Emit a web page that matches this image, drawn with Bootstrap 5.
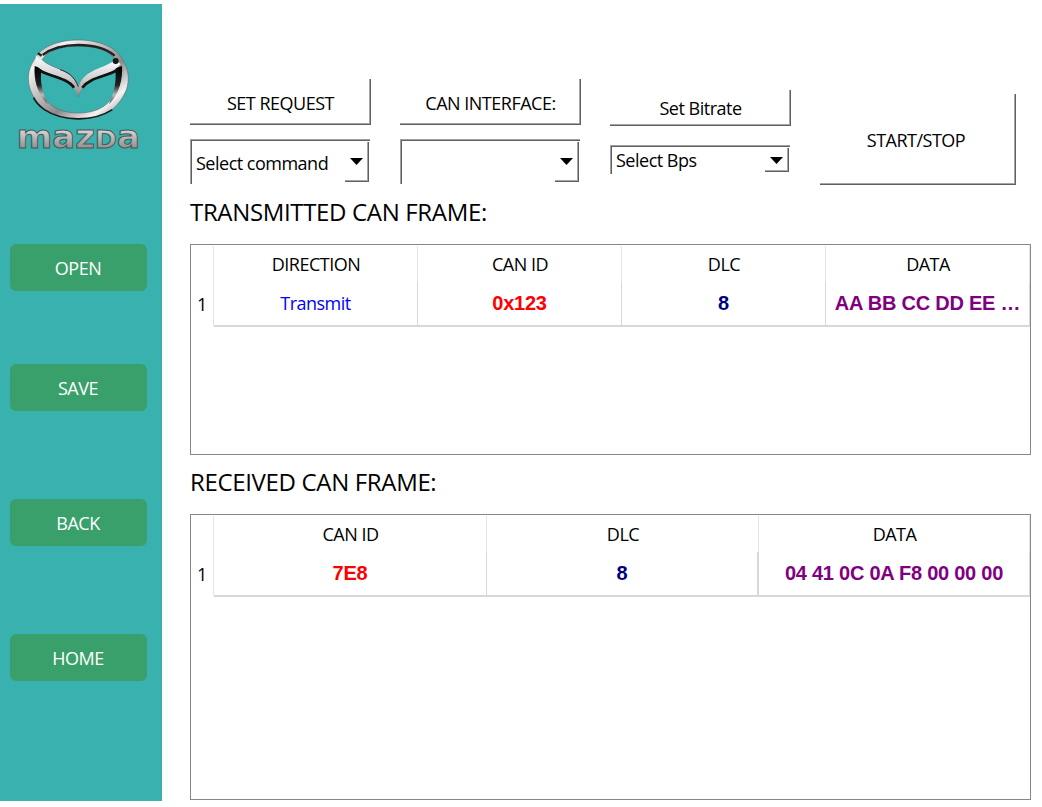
<!DOCTYPE html>
<html lang="en">
<head>
<meta charset="utf-8">
<title>CAN Frames</title>
<link rel="stylesheet" href="https://cdn.jsdelivr.net/npm/bootstrap@5.3.0/dist/css/bootstrap.min.css">
<style>
body{font-family:"Open Sans","Noto Sans",sans-serif;font-size:18px;letter-spacing:-.5px;color:#000;background:#fff;height:807px;overflow:hidden}
.side{width:162px;height:797px;margin-top:4px;background:#39b1ae}
.logo{width:162px;height:160px;display:block;margin-bottom:80px}
.side-btn{width:137px;height:47px;margin-left:10px;padding:2px 1px 1px 0;background:#3aa06b;color:#fff;border:0;border-radius:6px;font-size:18px;line-height:44px;letter-spacing:inherit}
.g1{margin-bottom:73px}.g2{margin-bottom:88px}
.main{margin-left:28px;width:841px}
.tools{padding-top:79px;height:185px;gap:29px}
.tool{width:181px}
.raised{display:flex;align-items:center;justify-content:center;width:100%;height:46px;padding:4px 0 0 1px;background:#fff;color:#000;border:0;border-right:1px solid #606060;border-bottom:1px solid #606060;border-radius:0;box-shadow:inset -1px -1px #a6a6a6;font-size:18px;letter-spacing:inherit}
.combo{margin-top:14px;width:180px;height:45px;border-left:1px solid #a0a0a0;border-top:1px solid #a0a0a0;box-shadow:inset 1px 1px #606060;padding:2px 0 2px 5px}
.drop{width:24px;align-self:stretch;margin-right:1px;border-right:1px solid #606060;border-bottom:1px solid #606060;box-shadow:inset -1px -1px #a6a6a6;padding-right:1px}
.combo-tall .drop{height:40px}
.combo-tall .chosen{padding-top:3px}
.low .chosen{padding-top:1px}
.low .drop{padding-top:2px}
.low{padding-top:11px}.low .raised{height:36px;padding-top:2px}
.low .combo{margin-top:19px;height:29px}
.go{width:196px;padding-top:15px}.go .raised{height:91px;padding:2px 3px 0 0}
.title{font-size:24px;line-height:30px;letter-spacing:-.34px;margin:12px 0 17px;font-weight:400}
.frame-box{border:1px solid #828790;width:841px;height:211px}
.frame-box.recv{height:286px}
.grid{table-layout:fixed;border-collapse:separate;border-spacing:0;width:839px;text-align:center}
.grid th,.grid td{padding:0;overflow:hidden;white-space:nowrap}
.grid th{font-weight:400;height:37px;line-height:36px;padding-top:1px;background:linear-gradient(#e5e5e5,#e5e5e5) right 1px/1px 36px no-repeat;background-position:right 1px}
.grid td{height:45px;line-height:41px;padding-top:1px;vertical-align:top;border-right:1px solid #d8d8d8;border-bottom:2px solid #d8d8d8}
.grid .idx{width:23px;border-bottom-color:transparent;border-right-color:#e5e5e5;line-height:42px}
.grid b{font-family:"Liberation Sans",Arial,sans-serif;font-size:20px;letter-spacing:-.25px}
.wide{border-right-width:2px!important}
</style>
</head>
<body>
<div class="d-flex align-items-start">
<aside class="side flex-shrink-0">
<svg class="logo" viewBox="0 12 486 480" aria-label="mazda">
<defs>
<linearGradient id="chrome" x1="0" y1="0" x2="1" y2="1"><stop offset="0" stop-color="#777"/><stop offset=".2" stop-color="#f4f4f4"/><stop offset=".42" stop-color="#bbb"/><stop offset=".6" stop-color="#8a8a8a"/><stop offset=".8" stop-color="#f4f4f4"/><stop offset="1" stop-color="#666"/></linearGradient>
<linearGradient id="wing" x1="0" y1="0" x2="0" y2="1"><stop offset="0" stop-color="#fff"/><stop offset=".55" stop-color="#ccc"/><stop offset="1" stop-color="#888"/></linearGradient>
<linearGradient id="word" x1="0" y1="0" x2="0" y2="1"><stop offset=".3" stop-color="#d6d6d6"/><stop offset=".9" stop-color="#808080"/></linearGradient>
<linearGradient id="inner" x1="0" y1="0" x2="0" y2="1"><stop offset="0" stop-color="#000"/><stop offset=".5" stop-color="#222"/><stop offset=".75" stop-color="#bbb"/><stop offset="1" stop-color="#444"/></linearGradient>
</defs>
<path fill="url(#chrome)" stroke="#58706f" stroke-width="2" fill-rule="evenodd" d="M235 120C300 120 350 143 367 178C395 220 391 273 349 317C302 370 168 370 121 317C79 273 75 220 103 178C120 143 170 120 235 120ZM235 138C180 138 145 151 126 179C160 211 215 203 235 262C255 203 320 210 346 179C325 151 290 138 235 138ZM115 205C112 240 120 275 144 306C182 350 288 350 326 306C350 275 358 240 355 205C330 230 249 225 235 290C221 225 140 230 115 205Z"/>
<path fill="none" stroke="#222" stroke-width="7" d="M128 165C155 144 190 135 235 135C282 135 320 147 344 167"/>
<path fill="none" stroke="#1c1c1c" stroke-width="5" d="M101 293C107 307 119 319 133 329C190 366 280 366 337 329"/>
<path fill="url(#inner)" d="M104 198C101 235 110 280 143 313C130 278 119 258 124 205ZM366 198C369 235 358 283 327 313C340 278 350 258 346 205Z"/>
<path fill="url(#wing)" d="M108 165C140 214 216 200 235 262V290C216 228 135 234 106 192Z"/>
<path fill="url(#wing)" d="M346 178C318 208 253 203 235 262V290C255 224 328 234 362 192Z"/>
<path fill="none" stroke="#111" stroke-width="8" d="M116 209C140 228 200 231 222 263M354 209C320 231 270 231 247 263"/>
<path fill="none" stroke="#333" stroke-width="3" d="M235 260C222 228 205 217 180 209"/>
<circle cx="347" cy="183" r="9" fill="#151515"/>
<path stroke="#222" stroke-width="7" d="M114 160l11 7"/>
<text x="50" y="445" textLength="370" lengthAdjust="spacingAndGlyphs" font-family="DejaVu Sans" font-weight="700" font-size="96" letter-spacing="0" fill="url(#word)" stroke="#4c5857" stroke-width="3">maz<tspan font-size="74">D</tspan>a</text>
</svg>
<button class="side-btn d-block g1">OPEN</button>
<button class="side-btn d-block g2">SAVE</button>
<button class="side-btn d-block g2">BACK</button>
<button class="side-btn d-block">HOME</button>
</aside>
<main class="main">
<div class="tools d-flex">
<div class="tool"><button class="raised">SET REQUEST</button>
<div class="combo combo-tall d-flex align-items-center justify-content-between"><span class="chosen">Select command</span><span class="drop d-flex align-items-center justify-content-center"><svg width="13" height="7"><path d="M0 0H13L6.5 7Z"/></svg></span></div></div>
<div class="tool"><button class="raised">CAN INTERFACE:</button>
<div class="combo combo-tall d-flex align-items-center justify-content-between"><span></span><span class="drop d-flex align-items-center justify-content-center"><svg width="13" height="7"><path d="M0 0H13L6.5 7Z"/></svg></span></div></div>
<div class="tool low"><button class="raised">Set Bitrate</button>
<div class="combo d-flex align-items-center justify-content-between"><span class="chosen">Select Bps</span><span class="drop d-flex align-items-center justify-content-center"><svg width="13" height="7"><path d="M0 0H13L6.5 7Z"/></svg></span></div></div>
<div class="go"><button class="raised">START/STOP</button></div>
</div>
<h1 class="title">TRANSMITTED CAN FRAME:</h1>
<div class="frame-box">
<table class="grid">
<colgroup><col style="width:23px"><col style="width:204px"><col style="width:204px"><col style="width:204px"><col style="width:204px"></colgroup>
<tr><th></th><th>DIRECTION</th><th>CAN ID</th><th>DLC</th><th>DATA</th></tr>
<tr><td class="idx">1</td><td style="color:#00f">Transmit</td><td style="color:red"><b>0x123</b></td><td style="color:navy"><b>8</b></td><td style="color:purple"><b>AA BB CC DD EE …</b></td></tr>
</table>
</div>
<h2 class="title">RECEIVED CAN FRAME:</h2>
<div class="frame-box recv">
<table class="grid">
<colgroup><col style="width:23px"><col style="width:273px"><col style="width:272px"><col style="width:271px"></colgroup>
<tr><th></th><th>CAN ID</th><th>DLC</th><th>DATA</th></tr>
<tr><td class="idx">1</td><td style="color:red"><b>7E8</b></td><td class="wide" style="color:navy"><b>8</b></td><td style="color:purple"><b>04 41 0C 0A F8 00 00 00</b></td></tr>
</table>
</div>
</main>
</div>
<script src="https://cdn.jsdelivr.net/npm/bootstrap@5.3.0/dist/js/bootstrap.bundle.min.js"></script>
</body>
</html>
